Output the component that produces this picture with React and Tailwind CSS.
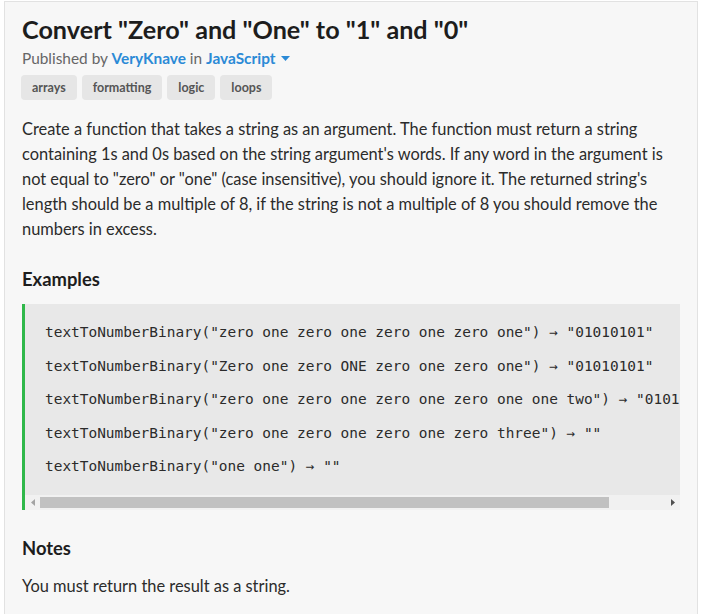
const examples = [
  'textToNumberBinary("zero one zero one zero one zero one") \u2192 "01010101"',
  'textToNumberBinary("Zero one zero ONE zero one zero one") \u2192 "01010101"',
  'textToNumberBinary("zero one zero one zero one zero one one two") \u2192 "01010101"',
  'textToNumberBinary("zero one zero one zero one zero three") \u2192 ""',
  'textToNumberBinary("one one") \u2192 ""',
];

const tags = ["arrays", "formatting", "logic", "loops"];

export default function App() {
  return (
    <div className="min-h-[614px] bg-white pl-[4px] pt-[1px] font-['Lato',sans-serif]">
      <div className="w-[694px] min-h-[620px] border border-[#e2e2e2] bg-[#f7f7f7] px-[17px] pt-[11px] pb-6">
        {/* Title */}
        <h1 className="text-[25.2px] leading-[32px] font-bold text-[#1d1d1d]">
          Convert "Zero" and "One" to "1" and "0"
        </h1>
        <div className="mt-[3px] flex items-center text-[15.4px] leading-[20px] text-[#666]">
          <span>Published by&nbsp;</span>
          <span className="font-bold text-[#2b8ad6]">VeryKnave</span>
          <span>&nbsp;in&nbsp;</span>
          <span className="font-bold text-[#2b8ad6]">JavaScript</span>
          <svg className="ml-[5px]" width="9" height="5" viewBox="0 0 9 5">
            <path d="M0 0h9L4.5 5z" fill="#2b8ad6" />
          </svg>
        </div>

        {/* Tags */}
        <div className="mt-[7px] -ml-[1px] flex gap-[5px]">
          {tags.map((t) => (
            <span
              key={t}
              className="h-[25px] rounded-[4px] bg-[#e6e6e6] px-[11px] text-[12.5px] leading-[25px] font-bold text-[#555]"
            >
              {t}
            </span>
          ))}
        </div>

        {/* Description */}
        <p className="mt-[16px] text-[16.4px] leading-[25px] text-[#2b2b2b]">
          Create a function that takes a string as an argument. The function must
          return a string containing 1s and 0s based on the string argument's words.
          If any word in the argument is not equal to "zero" or "one" (case
          insensitive), you should ignore it. The returned string's length should be
          a multiple of 8, if the string is not a multiple of 8 you should remove the
          numbers in excess.
        </p>

        {/* Examples */}
        <h2 className="mt-[26px] text-[18.4px] leading-[24px] font-bold text-[#1d1d1d]">
          Examples
        </h2>
        <div className="mt-[13px] border-l-[3px] border-[#2fb84a] bg-[#e8e8e8]">
          <div className="overflow-hidden pl-[20px] pr-[21px] py-[20px] font-['DejaVu_Sans_Mono',monospace] text-[14.45px] leading-[16.75px] text-[#2b2b2b] whitespace-pre">
            {examples.map((line, i) => (
              <div key={i} className={i > 0 ? "mt-[16.75px]" : ""}>
                {line}
              </div>
            ))}
          </div>
          {/* scrollbar */}
          <div className="flex h-[15px] items-center bg-[#f1f1f1]">
            <div className="flex w-[15px] items-center justify-center">
              <svg width="4" height="7" viewBox="0 0 4 7">
                <path d="M4 0v7L0 3.5z" fill="#a3a3a3" />
              </svg>
            </div>
            <div className="h-[11px] w-[569px] bg-[#c1c1c1]" />
            <div className="flex-1" />
            <div className="flex w-[15px] items-center justify-center">
              <svg width="4" height="7" viewBox="0 0 4 7">
                <path d="M0 0v7L4 3.5z" fill="#505050" />
              </svg>
            </div>
          </div>
        </div>

        {/* Notes */}
        <h2 className="mt-[26px] text-[18.4px] leading-[24px] font-bold text-[#1d1d1d]">
          Notes
        </h2>
        <p className="mt-[13px] text-[16.4px] leading-[25px] text-[#2b2b2b]">
          You must return the result as a string.
        </p>
      </div>
    </div>
  );
}
